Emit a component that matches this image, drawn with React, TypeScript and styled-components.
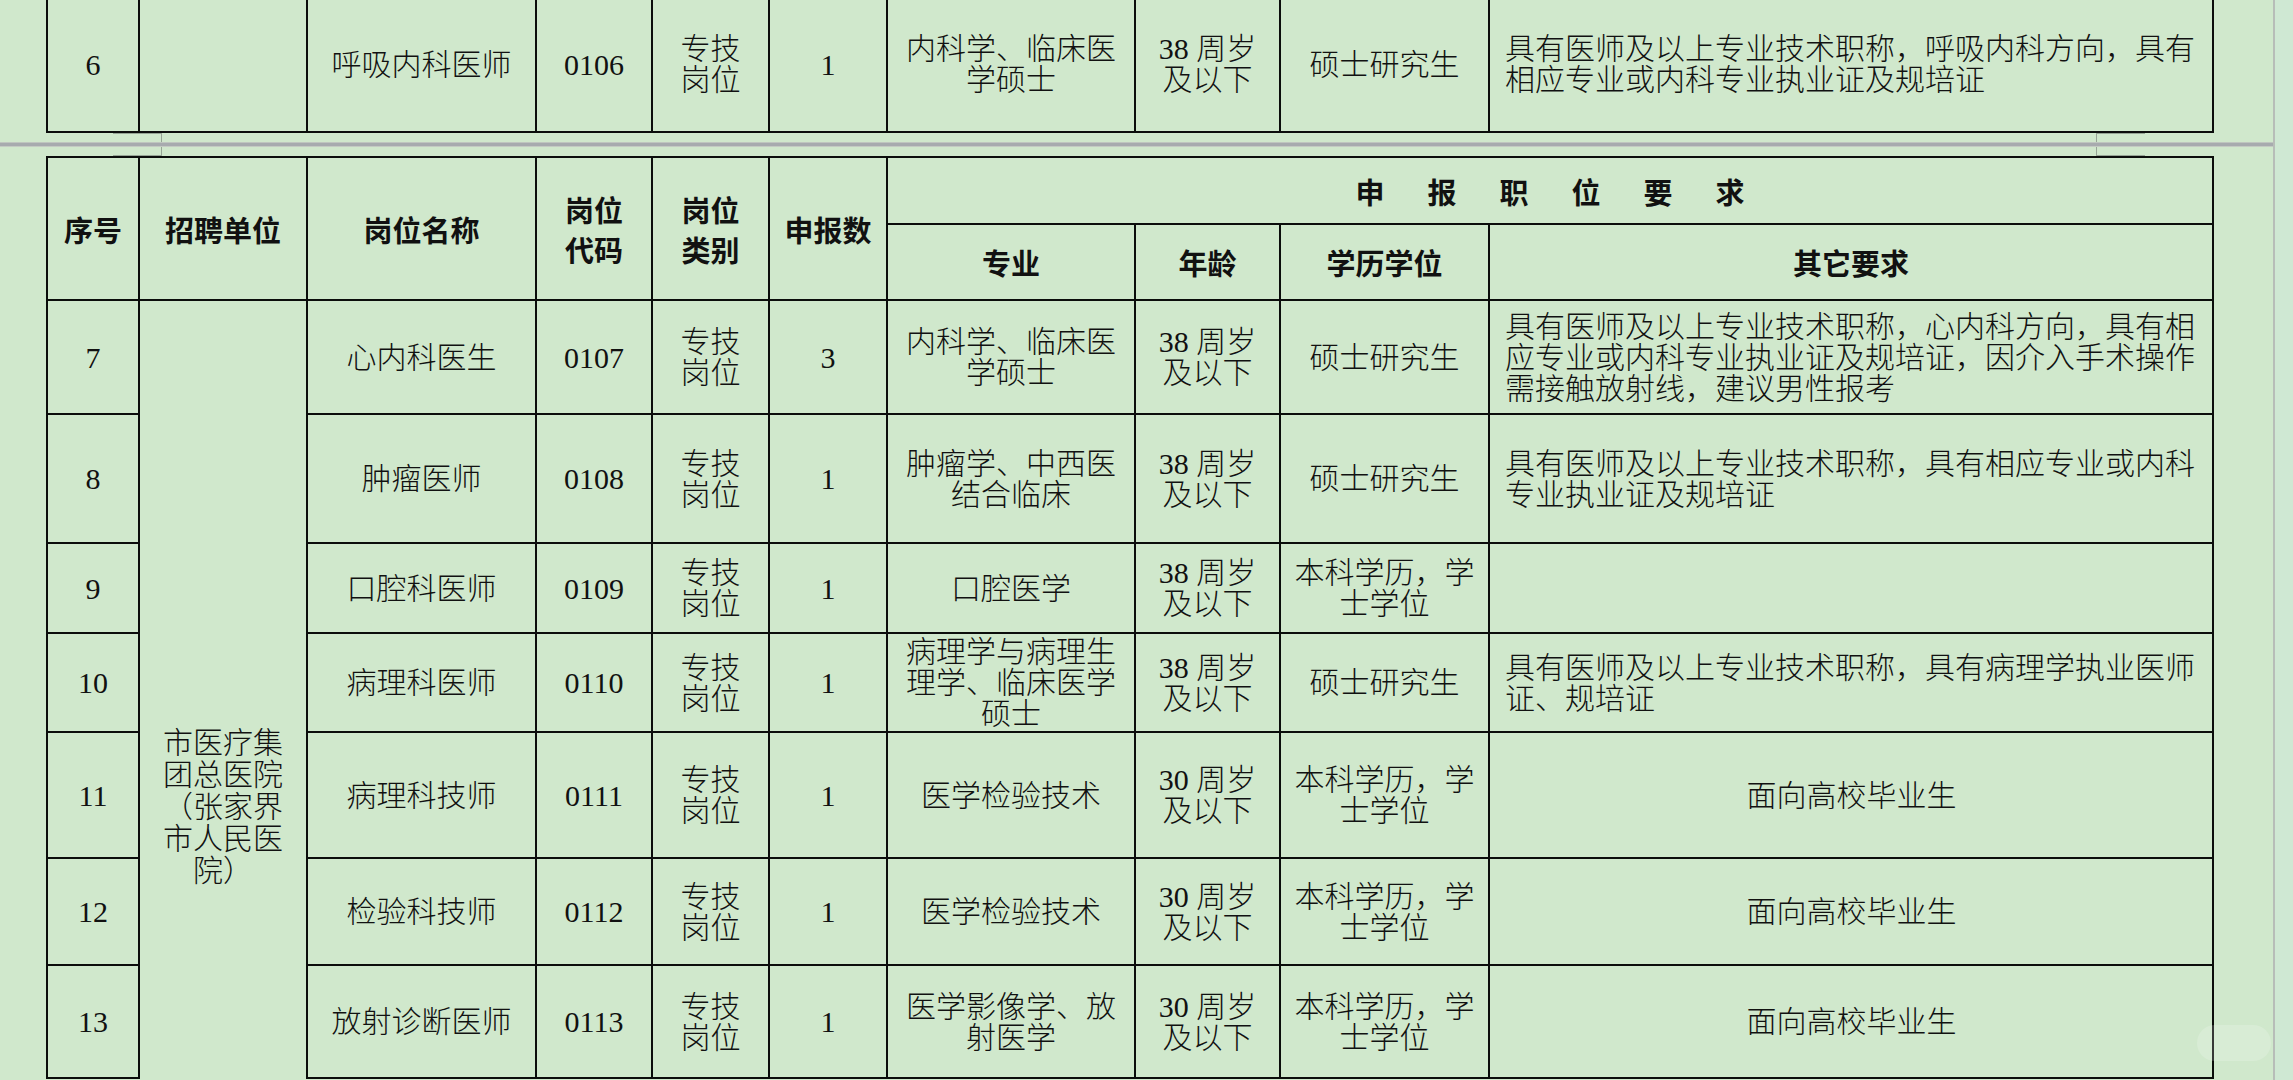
import styled, { createGlobalStyle } from "styled-components";

interface JobRow {
  no: string;
  name: string;
  code: string;
  kind: string;
  count: string;
  major: string;
  age: string;
  edu: string;
  other: string;
  otherCentered?: boolean;
  height: number;
}

const COLUMNS = [92, 168, 229, 116, 117, 118, 248, 145, 209, 724];

const UNIT = "市医疗集团总医院（张家界市人民医院）";

const previousRow: JobRow = {
  no: "6",
  name: "呼吸内科医师",
  code: "0106",
  kind: "专技\n岗位",
  count: "1",
  major: "内科学、临床医学硕士",
  age: "38 周岁\n及以下",
  edu: "硕士研究生",
  other: "具有医师及以上专业技术职称，呼吸内科方向，具有相应专业或内科专业执业证及规培证",
  height: 136,
};

const rows: JobRow[] = [
  {
    no: "7",
    name: "心内科医生",
    code: "0107",
    kind: "专技\n岗位",
    count: "3",
    major: "内科学、临床医学硕士",
    age: "38 周岁\n及以下",
    edu: "硕士研究生",
    other: "具有医师及以上专业技术职称，心内科方向，具有相应专业或内科专业执业证及规培证，因介入手术操作需接触放射线，建议男性报考",
    height: 114,
  },
  {
    no: "8",
    name: "肿瘤医师",
    code: "0108",
    kind: "专技\n岗位",
    count: "1",
    major: "肿瘤学、中西医结合临床",
    age: "38 周岁\n及以下",
    edu: "硕士研究生",
    other: "具有医师及以上专业技术职称，具有相应专业或内科专业执业证及规培证",
    height: 129,
  },
  {
    no: "9",
    name: "口腔科医师",
    code: "0109",
    kind: "专技\n岗位",
    count: "1",
    major: "口腔医学",
    age: "38 周岁\n及以下",
    edu: "本科学历，学士学位",
    other: "",
    height: 90,
  },
  {
    no: "10",
    name: "病理科医师",
    code: "0110",
    kind: "专技\n岗位",
    count: "1",
    major: "病理学与病理生理学、临床医学硕士",
    age: "38 周岁\n及以下",
    edu: "硕士研究生",
    other: "具有医师及以上专业技术职称，具有病理学执业医师证、规培证",
    height: 99,
  },
  {
    no: "11",
    name: "病理科技师",
    code: "0111",
    kind: "专技\n岗位",
    count: "1",
    major: "医学检验技术",
    age: "30 周岁\n及以下",
    edu: "本科学历，学士学位",
    other: "面向高校毕业生",
    otherCentered: true,
    height: 126,
  },
  {
    no: "12",
    name: "检验科技师",
    code: "0112",
    kind: "专技\n岗位",
    count: "1",
    major: "医学检验技术",
    age: "30 周岁\n及以下",
    edu: "本科学历，学士学位",
    other: "面向高校毕业生",
    otherCentered: true,
    height: 107,
  },
  {
    no: "13",
    name: "放射诊断医师",
    code: "0113",
    kind: "专技\n岗位",
    count: "1",
    major: "医学影像学、放射医学",
    age: "30 周岁\n及以下",
    edu: "本科学历，学士学位",
    other: "面向高校毕业生",
    otherCentered: true,
    height: 113,
  },
];

function Columns() {
  return (
    <colgroup>
      {COLUMNS.map((w, i) => (
        <Col key={i} $w={w} />
      ))}
    </colgroup>
  );
}

function RowCells({ row }: { row: JobRow }) {
  return (
    <>
      <Cell>{row.name}</Cell>
      <Cell>{row.code}</Cell>
      <Cell>{row.kind}</Cell>
      <Cell>{row.count}</Cell>
      <Cell>{row.major}</Cell>
      <Cell>{row.age}</Cell>
      <Cell>{row.edu}</Cell>
      <OtherCell $centered={row.otherCentered}>{row.other}</OtherCell>
    </>
  );
}

export default function App() {
  return (
    <>
      <GlobalStyle />
      <Viewport>
        <Document>
          <TopPage>
            <Sheet>
              <Columns />
              <tbody>
                <Tr $h={previousRow.height}>
                  <Cell>{previousRow.no}</Cell>
                  <UnitCell />
                  <RowCells row={previousRow} />
                </Tr>
              </tbody>
            </Sheet>
            <CornerMark $side="left" $edge="bottom" />
            <CornerMark $side="right" $edge="bottom" />
          </TopPage>
          <PageGap />
          <BottomPage>
            <Sheet>
              <Columns />
              <thead>
                <Tr $h={67}>
                  <HeadCell rowSpan={2}>序号</HeadCell>
                  <HeadCell rowSpan={2}>招聘单位</HeadCell>
                  <HeadCell rowSpan={2}>岗位名称</HeadCell>
                  <HeadCell rowSpan={2}>{"岗位\n代码"}</HeadCell>
                  <HeadCell rowSpan={2}>{"岗位\n类别"}</HeadCell>
                  <HeadCell rowSpan={2}>申报数</HeadCell>
                  <GroupHead colSpan={5}>申报职位要求</GroupHead>
                </Tr>
                <Tr $h={76}>
                  <HeadCell>专业</HeadCell>
                  <HeadCell>年龄</HeadCell>
                  <HeadCell>学历学位</HeadCell>
                  <HeadCell>其它要求</HeadCell>
                </Tr>
              </thead>
              <tbody>
                {rows.map((row, i) => (
                  <Tr key={row.no} $h={row.height}>
                    <Cell>{row.no}</Cell>
                    {i === 0 && (
                      <UnitCell rowSpan={rows.length} $open>
                        {UNIT}
                      </UnitCell>
                    )}
                    <RowCells row={row} />
                  </Tr>
                ))}
              </tbody>
            </Sheet>
            <CornerMark $side="left" $edge="top" />
            <CornerMark $side="right" $edge="top" />
            <Watermark />
          </BottomPage>
        </Document>
        <SideStrip />
      </Viewport>
    </>
  );
}

const GlobalStyle = createGlobalStyle`
  html, body {
    margin: 0;
    padding: 0;
    height: 1080px;
    overflow: hidden;
    background: #d0e8cc;
  }
`;

const Viewport = styled.div`
  display: flex;
  height: 1080px;
  background: #d0e8cc;
`;

const Document = styled.div`
  display: flex;
  flex-direction: column;
  width: 2273px;
  flex-shrink: 0;
`;

const TopPage = styled.div`
  position: relative;
  height: 142px;
  padding: 0 0 9px 46px;
  box-sizing: border-box;
  display: flex;
  flex-direction: column;
  justify-content: flex-end;
  overflow: hidden;
  background: #d0e8cc;
`;

const PageGap = styled.div`
  height: 5px;
  flex-shrink: 0;
  background: linear-gradient(#bfc6bf 0 1px, #a7abae 1px 4px, #c4cbc3 4px);
`;

const BottomPage = styled.div`
  position: relative;
  flex: 1;
  padding: 9px 0 0 46px;
  overflow: hidden;
  background: #d0e8cc;
`;

const SideStrip = styled.div`
  flex: 1;
  border-left: 2px solid #b7bdb8;
  background: #cfe8d3;
`;

const Sheet = styled.table`
  border-collapse: collapse;
  table-layout: fixed;
  width: 2168px;
  color: #111;
  flex-shrink: 0;
`;

const Col = styled.col<{ $w: number }>`
  width: ${(p) => p.$w}px;
`;

const Tr = styled.tr<{ $h: number }>`
  height: ${(p) => p.$h}px;
`;

const Cell = styled.td`
  border: 2px solid #0b0d0b;
  padding: 0 10px;
  text-align: center;
  vertical-align: middle;
  font-family: "Liberation Serif", "Noto Sans CJK SC", serif;
  font-size: 30px;
  font-weight: 300;
  line-height: 31px;
  white-space: pre-line;
`;

/* merged unit cell: its middle lies below the fold, so the text sits low */
const UnitCell = styled(Cell)<{ $open?: boolean }>`
  vertical-align: top;
  line-height: 32px;
  ${(p) =>
    p.$open
      ? "padding: 426px 20px 0; border-bottom: none;"
      : "padding: 0 20px; border-top: none;"}
`;

const OtherCell = styled(Cell)<{ $centered?: boolean }>`
  padding: 0 14px 0 15px;
  text-align: ${(p) => (p.$centered ? "center" : "left")};
`;

const HeadCell = styled.th`
  border: 2px solid #0b0d0b;
  padding: 0;
  text-align: center;
  vertical-align: middle;
  font-family: "Noto Sans CJK SC", "Liberation Sans", sans-serif;
  font-size: 29px;
  font-weight: 700;
  line-height: 40px;
  white-space: pre-line;
`;

const GroupHead = styled(HeadCell)`
  letter-spacing: 43px;
  padding-left: 43px;
`;

const CornerMark = styled.div<{ $side: "left" | "right"; $edge: "top" | "bottom" }>`
  position: absolute;
  ${(p) => (p.$side === "left" ? "left: 113px;" : "left: 2096px;")}
  ${(p) => (p.$edge === "bottom" ? "bottom: 0;" : "top: 0;")}
  width: 48px;
  height: 8px;
  border-color: #97a596;
  border-style: solid;
  border-width: 0;
  ${(p) => (p.$edge === "bottom" ? "border-top-width: 1px;" : "border-bottom-width: 1px;")}
  ${(p) => (p.$side === "left" ? "border-right-width: 1px;" : "border-left-width: 1px;")}
`;

const Watermark = styled.div`
  position: absolute;
  left: 2197px;
  top: 878px;
  width: 74px;
  height: 36px;
  border-radius: 18px;
  background: rgba(255, 255, 255, 0.18);
`;
